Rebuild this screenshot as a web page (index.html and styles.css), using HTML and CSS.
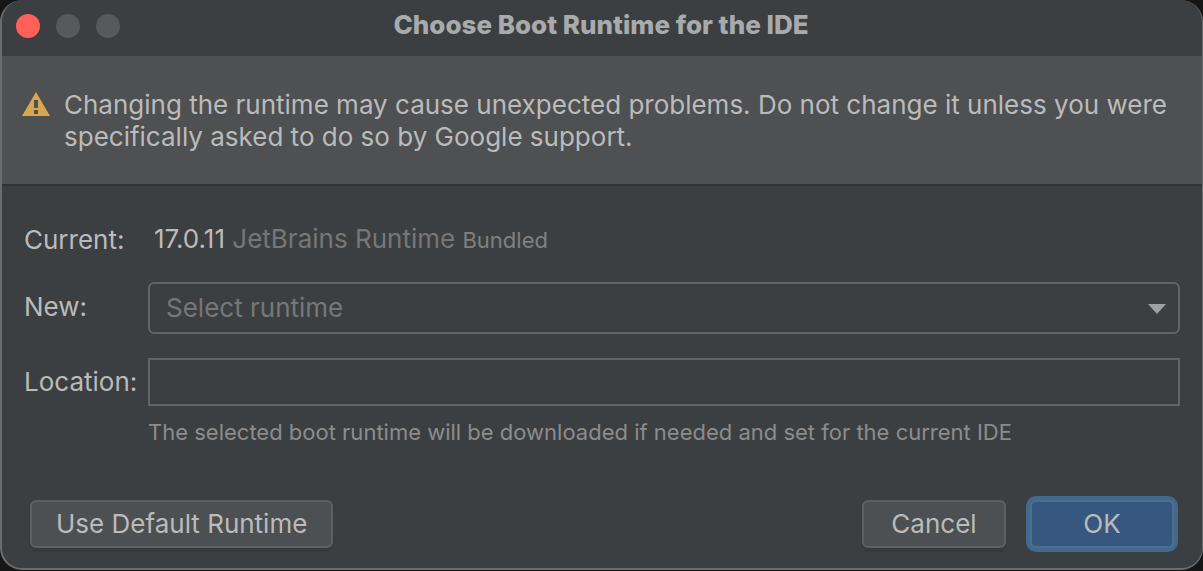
FILE: index.html
```html
<!DOCTYPE html>
<html lang="en">
<head>
<meta charset="utf-8">
<title>Choose Boot Runtime for the IDE</title>
<link rel="stylesheet" href="styles.css">
</head>
<body>
<main class="dialog">
  <header class="titlebar">
    <div class="lights">
      <button class="light light-close" aria-label="Close"></button>
      <button class="light" aria-label="Minimize" disabled></button>
      <button class="light" aria-label="Zoom" disabled></button>
    </div>
    <h1 class="title">Choose Boot Runtime for the IDE</h1>
  </header>
  <section class="banner">
    <svg class="warning" viewBox="0 0 28 24" aria-hidden="true">
      <path fill="#d9a650" fill-rule="evenodd" d="M14 0 28 24H0ZM12 8v8h4V8ZM12 18v4h4v-4Z"/>
    </svg>
    <p class="message">Changing the runtime may cause unexpected problems. Do not change it unless you were specifically asked to do so by Google support.</p>
  </section>
  <form class="content">
    <div class="fields">
      <span class="label">Current:</span>
      <div class="current"><span class="version">17.0.11</span> JetBrains Runtime <span class="small">Bundled</span></div>
      <label class="label" for="runtime">New:</label>
      <div class="combo">
        <select class="select" id="runtime"><option>Select runtime</option></select>
        <svg class="arrow" viewBox="0 0 18 10" aria-hidden="true"><path fill="#9da0a5" d="M0 0h18L9 10Z"/></svg>
      </div>
      <label class="label" for="location">Location:</label>
      <input class="input" id="location" type="text">
      <p class="hint">The selected boot runtime will be downloaded if needed and set for the current IDE</p>
    </div>
    <footer class="actions">
      <button class="button button-default" type="button">Use Default Runtime</button>
      <button class="button" type="button">Cancel</button>
      <button class="button button-primary" type="submit">OK</button>
    </footer>
  </form>
</main>
</body>
</html>
```
FILE: styles.css
```css
* {
  box-sizing: border-box;
}

body {
  margin: 0;
  background: #161616;
  color: #bbbbbb;
  font: 26px/32px Inter, "Liberation Sans", sans-serif;
}

.dialog {
  display: flex;
  flex-direction: column;
  min-height: calc(100vh - 1px);
  border: solid #6a6c6d;
  border-width: 0 1px 2px 2px;
  border-radius: 22px;
  background: #3c3f41;
  overflow: hidden;
}

.titlebar {
  display: grid;
  grid-template-columns: 1fr auto 1fr;
  align-items: center;
  height: 56px;
  padding: 0 16px 6px 14px;
}

.lights {
  display: flex;
  gap: 16px;
  padding-top: 2px;
}

.light {
  width: 24px;
  height: 24px;
  padding: 0;
  border: 0;
  border-radius: 50%;
  background: #58595b;
}

.light-close {
  background: #ff6159;
}

.title {
  margin: 0;
  color: #a9aaab;
  font-size: 26px;
  font-weight: 800;
}

.banner {
  display: flex;
  align-items: flex-start;
  gap: 14px;
  padding: 33px 24px 31px 20px;
  border-bottom: 2px solid #323232;
  background: #4e5052;
}

.warning {
  flex: none;
  width: 28px;
  height: 24px;
  margin-top: 3px;
}

.message {
  margin: 0;
}

.content {
  display: flex;
  flex: 1;
  flex-direction: column;
  justify-content: space-between;
  gap: 24px;
  padding: 37px 22px 20px 22px;
}

.fields {
  display: grid;
  grid-template-columns: 112px 1fr;
  column-gap: 12px;
  align-items: center;
}

.current {
  padding-left: 6px;
  color: #777777;
}

.version {
  color: #bbbbbb;
}

.small {
  color: #808080;
  font-size: 22px;
}

.combo {
  position: relative;
  margin: 26px 0 24px;
}

.select,
.input {
  display: block;
  width: 100%;
  border: 2px solid #646464;
  background: #3c3f41;
  color: #bbbbbb;
  font: inherit;
}

.select {
  height: 52px;
  padding: 0 40px 0 16px;
  border-radius: 6px;
  color: #777777;
  appearance: none;
}

.arrow {
  position: absolute;
  top: 22px;
  right: 14px;
  width: 18px;
  height: 10px;
  pointer-events: none;
}

.input {
  height: 48px;
  padding: 0 10px;
}

.hint {
  grid-column: 2;
  margin: 10px 0 0;
  color: #8c8c8c;
  font-size: 22px;
}

.actions {
  display: flex;
  gap: 24px;
  padding: 0 6px;
}

.button {
  height: 48px;
  min-width: 144px;
  padding: 0 24px;
  border: 2px solid #5e6060;
  border-radius: 6px;
  background: #4c5052;
  box-shadow: 0 4px 0 #38393a;
  color: #bbbbbb;
  font: inherit;
}

.button-default {
  margin-right: auto;
}

.button-primary {
  border-color: #4c708c;
  background: #365880;
  box-shadow: 0 0 0 4px #43698e;
}
```
